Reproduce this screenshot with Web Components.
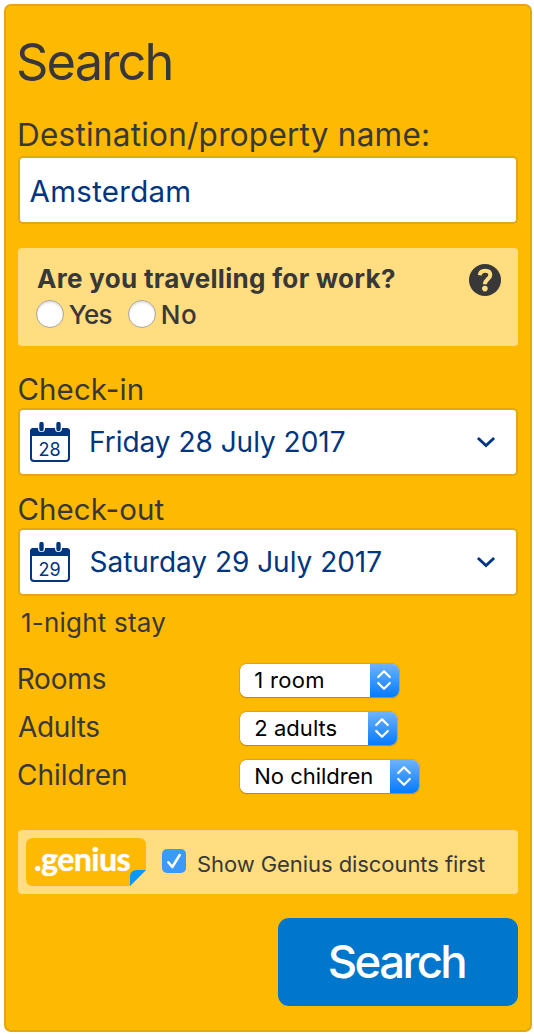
<!DOCTYPE html>
<html lang="en">
<head>
<meta charset="utf-8">
<title>Search</title>
<style>
html{background:#fff}
body{margin:0;font-family:Inter,"Liberation Sans",sans-serif;color:#383838}
</style>
</head>
<body>
<search-panel></search-panel>
<script>
const define = (name, html, setup) => {
  const template = document.createElement('template');
  template.innerHTML = html;
  customElements.define(name, class extends HTMLElement {
    connectedCallback() {
      if (this.shadowRoot) return;
      this.attachShadow({ mode: 'open' }).append(template.content.cloneNode(true));
      if (setup) setup(this, this.shadowRoot);
    }
  });
};

/* One line of type, tracked so that its visible width equals the "measure" attribute. */
const pen = document.createElement('canvas').getContext('2d');
define('type-line', `
<style>
:host{display:block;flex:none;white-space:nowrap;line-height:inherit}
span{display:block;font-kerning:normal}
</style><span><slot></slot></span>`, (host, root) => {
  const size = +host.getAttribute('size');
  const weight = host.getAttribute('weight') || 430;
  const face = host.getAttribute('face') || 'Inter';
  const measure = +host.getAttribute('measure');
  const text = host.textContent.trim();
  pen.font = `${weight} ${size}px ${face}`;
  const m = pen.measureText(text);
  const ink = m.actualBoundingBoxRight + m.actualBoundingBoxLeft;
  const span = root.querySelector('span');
  host.style.width = measure + 'px';
  span.style.fontFamily = `${face}, sans-serif`;
  span.style.fontSize = size + 'px';
  span.style.fontWeight = weight;
  span.style.letterSpacing = ((measure - ink) / (text.length - 1)).toFixed(3) + 'px';
  span.style.marginLeft = m.actualBoundingBoxLeft + 'px';
});

define('field-label', `
<style>
:host{display:block;box-sizing:border-box;padding-left:.4px;line-height:37px}
</style><slot></slot>`);

define('input-box', `
<style>
:host{display:flex;align-items:center;box-sizing:border-box;height:68px;border:2px solid #e0a914;border-radius:5px;background:#fff;color:#003580;padding:0 10px;line-height:64px}
</style><slot></slot>`);

define('calendar-icon', `
<style>
:host{display:grid;flex:none;width:40px;height:40px;color:#003580}
svg,div{grid-area:1/1}
div{padding:14px 0 0 9.5px;line-height:27px}
</style>
<svg width="40" height="40" viewBox="0 0 40 40">
<rect x="1" y="7" width="38" height="32" rx="3" fill="#fff" stroke="#003580" stroke-width="2"/>
<path d="M0 14V9.500Q0 6 3.500 6H36.500Q40 6 40 9.500V14Z" fill="#003580"/>
<g stroke-linecap="round"><path d="M11.500 2.500V6.500M28.500 2.500V6.500" stroke="#fff" stroke-width="7"/><path d="M11.500 2V7M28.500 2V7" stroke="#003580" stroke-width="4.400"/></g>
</svg>
<div><slot></slot></div>`);

define('date-box', `
<style>
:host{display:block}
.date{flex:1;padding:0 0 0 21px}
.chevron{flex:none;margin-right:10.500px}
</style>
<input-box>
<slot name="icon"></slot>
<div class="date"><slot></slot></div>
<svg class="chevron" width="20" height="12" viewBox="0 0 20 12"><path d="M1.900 1.900L10 9.500L18.100 1.900" fill="none" stroke="#003580" stroke-width="2.800"/></svg>
</input-box>`);

define('radio-dot', `
<style>
:host{display:block;flex:none;box-sizing:border-box;width:28px;height:28px;border-radius:50%;border:1px solid #aaa49a;background:#fff;box-shadow:inset 0 2px 2px #e3e3e3}
</style>`);

define('work-question', `
<style>
:host{display:flex;justify-content:space-between;box-sizing:border-box;height:98px;border-radius:4px;background:#ffdd80;padding:16px 17px 0 18px}
.title{line-height:30px;padding:0 0 6px 1px}
.options{display:flex;align-items:center;height:28px;line-height:28px}
.no{margin-left:17px}
.answer{padding-top:2px}
svg{flex:none}
</style>
<div>
<div class="title"><type-line size="26" weight="700" measure="358">Are you travelling for work?</type-line></div>
<div class="options">
<radio-dot></radio-dot><type-line class="answer" style="margin-left:4.800px" size="26" weight="530" measure="42.700">Yes</type-line>
<radio-dot class="no" style="margin-left:16.500px"></radio-dot><type-line class="answer" style="margin-left:6.700px" size="26" weight="530" measure="33.300">No</type-line>
</div>
</div>
<svg width="32" height="32" viewBox="0 0 32 32"><circle cx="16" cy="16" r="16" fill="#383838"/><path d="M10.800 11.200C11.100 8.200 13.300 6.800 16.100 6.800C19.200 6.800 21.300 8.300 21.300 10.900C21.300 14.900 15.900 15.300 15.900 20.200" fill="none" stroke="#ffdd80" stroke-width="4"/><circle cx="15.900" cy="24.600" r="2.800" fill="#ffdd80"/></svg>`);

define('select-button', `
<style>
:host{display:flex;box-sizing:border-box;height:33px;border-radius:6.500px;background:#fff;color:#000;line-height:33px;box-shadow:0 0 0 .7px #c48f00aa,0 1px 1px #8a650099;overflow:hidden}
.value{flex:1;padding-left:15.800px}
.arrows{display:grid;place-items:center;width:29px;background:linear-gradient(#6db3fb,#067aff)}
</style>
<div class="value"><slot></slot></div>
<div class="arrows"><svg width="16" height="22" viewBox="0 0 16 22"><path d="M2.200 8L8 2.200L13.800 8M2.200 14L8 19.800L13.800 14" fill="none" stroke="#fff" stroke-width="2.200" stroke-linecap="round" stroke-linejoin="round"/></svg></div>`);

define('option-row', `
<style>
:host{display:grid;grid-template-columns:221.500px auto;justify-content:start;align-items:center;height:48px}
.name{line-height:44px;padding-bottom:3px}
</style>
<div class="name"><slot name="name"></slot></div><slot></slot>`);

define('genius-logo', `
<style>
:host{display:grid;flex:none;width:120px;height:48px}
svg,div{grid-area:1/1}
div{padding-left:9px;line-height:42px;color:#fff;text-shadow:0 0 1px #fff}
</style>
<svg width="120" height="48" viewBox="0 0 120 48"><path d="M7 0H113Q120 0 120 7V32L104 48H7Q0 48 0 41V7Q0 0 7 0Z" fill="#feba02"/><path d="M104 48V39Q104 32 111 32H120Z" fill="#0896ff"/></svg>
<div><type-line size="32" weight="700" face="Lato" measure="95.500">.genius</type-line></div>`);

define('check-mark', `
<style>
:host{display:block;flex:none;width:24px;height:24px}
svg{display:block}
</style>
<svg width="24" height="24" viewBox="0 0 24 24"><rect width="24" height="24" rx="5" fill="#3b99fc"/><path d="M6.300 13.200L10.300 18L17.700 6" fill="none" stroke="#fff" stroke-width="2.500" stroke-linecap="round" stroke-linejoin="round"/></svg>`);

define('genius-bar', `
<style>
:host{display:flex;align-items:center;box-sizing:border-box;height:64px;border-radius:4px;background:#ffdd80;padding-left:8px}
check-mark{margin:-2px 12px 0 16px}
.text{line-height:60px;padding-top:4px}
</style>
<genius-logo></genius-logo><check-mark></check-mark><div class="text"><slot></slot></div>`);

define('submit-button', `
<style>
:host{display:flex;justify-content:center;box-sizing:border-box;width:240px;height:88px;border-radius:11px;background:#0077cc;color:#fff;line-height:87px;padding-right:1px}
</style><slot></slot>`);

define('search-panel', `
<style>
:host{display:block;box-sizing:border-box;width:528px;height:1028px;margin:4px 0 0 4px;border:2px solid #e0a914;border-radius:7px;background:#feba02;padding:30px 12px 0}
.title{line-height:52px;padding-left:0}
.dest{line-height:43px;margin-top:25px;padding-left:1px}
.place{padding:2px 0 0}
work-question{margin-top:24px}
.in{margin-top:25px}
.out{margin-top:15px}
.stay{line-height:53px;padding:0 0 7px 4px}
genius-bar{margin-top:30px}
submit-button{margin:24px 0 0 auto}
</style>
<div class="title"><type-line size="50.500" measure="152.500">Search</type-line></div>
<field-label class="dest"><type-line size="31.500" measure="409">Destination/property name:</type-line></field-label>
<input-box><type-line class="place" style="margin-left:-.4px" size="29.500" measure="159.700">Amsterdam</type-line></input-box>
<work-question></work-question>
<field-label class="in"><type-line size="29.500" measure="124.300">Check-in</type-line></field-label>
<date-box><calendar-icon slot="icon"><type-line size="18" measure="21">28</type-line></calendar-icon><type-line size="28" measure="253.700">Friday 28 July 2017</type-line></date-box>
<field-label class="out"><type-line size="29.500" measure="146">Check-out</type-line></field-label>
<date-box><calendar-icon slot="icon"><type-line size="18" measure="21">29</type-line></calendar-icon><type-line style="margin-left:-.5px" size="28" measure="290.700">Saturday 29 July 2017</type-line></date-box>
<div class="stay"><type-line size="26" measure="143.300">1-night stay</type-line></div>
<option-row><type-line slot="name" style="margin-left:.7px" size="28" measure="87">Rooms</type-line><select-button style="width:159px"><type-line size="22" measure="68">1 room</type-line></select-button></option-row>
<option-row><type-line slot="name" size="28" measure="81.300">Adults</type-line><select-button style="width:157px"><type-line size="22" measure="81.300">2 adults</type-line></select-button></option-row>
<option-row><type-line slot="name" size="28" measure="108">Children</type-line><select-button style="width:179px"><type-line size="22" measure="117">No children</type-line></select-button></option-row>
<genius-bar><type-line size="22" measure="287">Show Genius discounts first</type-line></genius-bar>
<submit-button><type-line size="45.500" weight="480" measure="135.700">Search</type-line></submit-button>`);
</script>
</body>
</html>
